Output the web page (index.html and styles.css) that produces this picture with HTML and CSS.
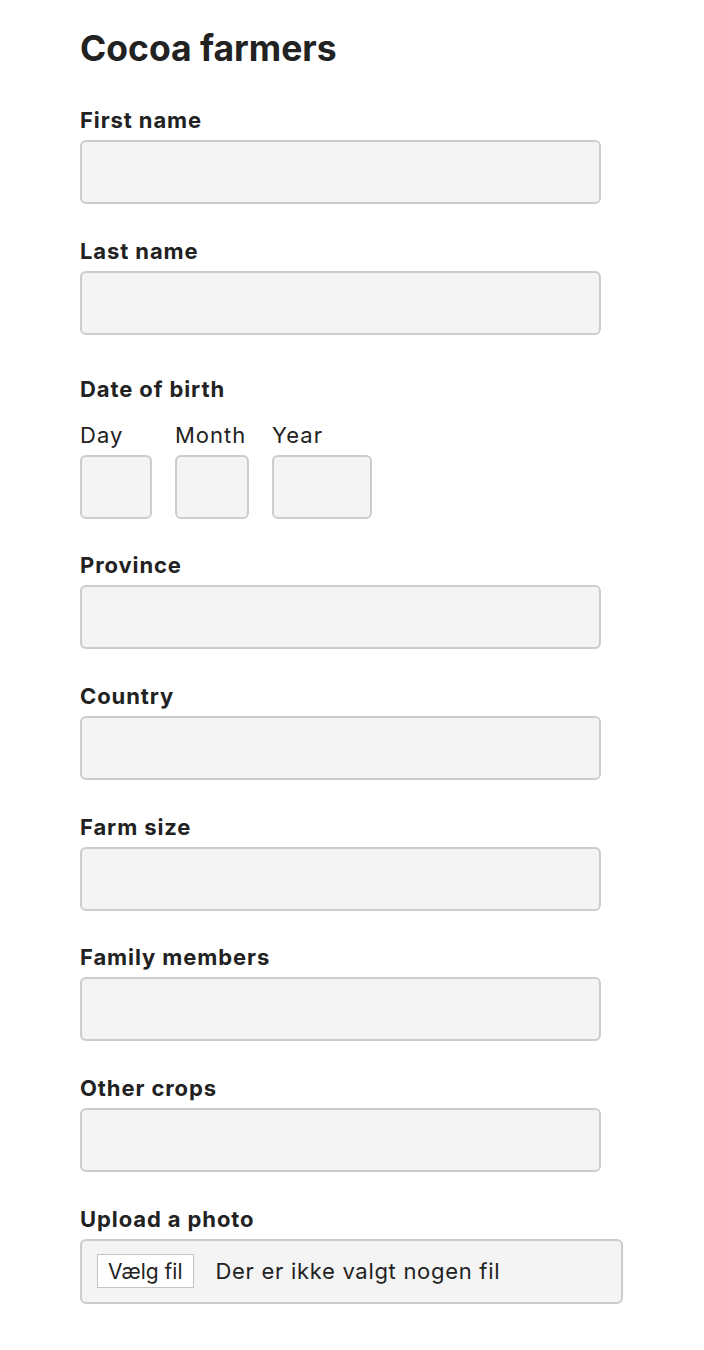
FILE: index.html
```html
<!DOCTYPE html>
<html lang="en">
<head>
<meta charset="utf-8">
<title>Cocoa farmers</title>
<link rel="stylesheet" href="styles.css">
</head>
<body>
<main class="page">
  <h1 class="title">Cocoa farmers</h1>
  <form class="form">
    <div class="group">
      <label class="label">First name</label>
      <div class="field"></div>
    </div>
    <div class="group">
      <label class="label">Last name</label>
      <div class="field"></div>
    </div>
    <fieldset class="group date">
      <legend class="label">Date of birth</legend>
      <div class="date-row">
        <div class="date-item">
          <span class="sublabel">Day</span>
          <div class="field day"></div>
        </div>
        <div class="date-item">
          <span class="sublabel">Month</span>
          <div class="field month"></div>
        </div>
        <div class="date-item">
          <span class="sublabel">Year</span>
          <div class="field year"></div>
        </div>
      </div>
    </fieldset>
    <div class="group">
      <label class="label">Province</label>
      <div class="field"></div>
    </div>
    <div class="group">
      <label class="label">Country</label>
      <div class="field"></div>
    </div>
    <div class="group">
      <label class="label">Farm size</label>
      <div class="field"></div>
    </div>
    <div class="group">
      <label class="label">Family members</label>
      <div class="field"></div>
    </div>
    <div class="group">
      <label class="label">Other crops</label>
      <div class="field"></div>
    </div>
    <div class="group">
      <label class="label">Upload a photo</label>
      <div class="field file">
        <span class="file-btn">Vælg fil</span>
        <span class="file-text">Der er ikke valgt nogen fil</span>
      </div>
    </div>
  </form>
</main>
</body>
</html>
```
FILE: styles.css
```css
* { box-sizing: border-box; }
html, body { margin: 0; padding: 0; background: #ffffff; }
body {
  font-family: Inter, "Noto Sans", "Liberation Sans", sans-serif;
  color: #222222;
}
.page {
  padding: 27px 0 40px 80px;
}
.title {
  margin: 0;
  font-size: 35.5px;
  line-height: 44px;
  font-weight: 700;
}
.form {
  margin-top: 35px;
}
.group {
  margin: 0 0 32.7px 0;
  padding: 0;
  border: 0;
  min-width: 0;
}
.label {
  display: block;
  padding: 0;
  font-size: 22px;
  line-height: 28px;
  font-weight: 700;
  letter-spacing: 0.9px;
  margin-bottom: 6px;
}
.field {
  width: 521px;
  height: 64px;
  background: #f4f4f4;
  border: 2px solid #cccccc;
  border-radius: 6px;
}
.date {
  margin-top: 40px;
}
.date .label {
  margin-bottom: 18px;
}
.date-row {
  display: flex;
  gap: 23px;
}
.date-item {
  display: flex;
  flex-direction: column;
}
.sublabel {
  font-size: 22px;
  line-height: 28px;
  font-weight: 400;
  letter-spacing: 1px;
  margin-bottom: 6px;
}
.field.day { width: 72px; }
.field.month { width: 74px; }
.field.year { width: 100px; }
.field.file {
  width: 543px;
  height: 65px;
  display: flex;
  align-items: center;
  padding-left: 15px;
}
.file-btn {
  display: inline-flex;
  align-items: center;
  height: 34px;
  padding: 0 10px;
  background: #ffffff;
  border: 1px solid #c4c4c4;
  font-size: 21px;
  color: #222222;
}
.file-text {
  margin-left: 22px;
  font-size: 22px;
  letter-spacing: 0.7px;
}
```
